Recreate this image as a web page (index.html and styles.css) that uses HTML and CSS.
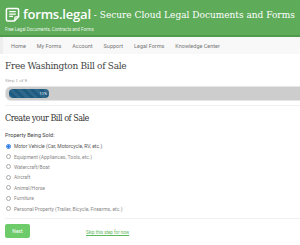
FILE: index.html
```html
<!DOCTYPE html>
<html lang="en">
<head>
  <meta charset="UTF-8" />
  <title>Free Washington Bill of Sale - forms.legal</title>
  <meta name="viewport" content="width=device-width, initial-scale=1.0" />
  <link rel="stylesheet" href="styles.css">
</head>
<body>

  <header class="site-header">
    <div class="brand">
      <svg class="logo" width="15" height="15" viewBox="0 0 16 16">
        <path d="M3 1.5h10a1.5 1.5 0 0 1 1.5 1.5v7.5l-4.5 4.5h-7A1.5 1.5 0 0 1 1.5 13.5V3A1.5 1.5 0 0 1 3 1.5z" fill="none" stroke="#fff" stroke-width="1.6" stroke-linejoin="round"/>
        <path d="M14.5 10.5h-3a1 1 0 0 0-1 1v3.5" fill="none" stroke="#fff" stroke-width="1.4"/>
        <path d="M4.5 5h7M4.5 7.5h7M4.5 10h4" stroke="#fff" stroke-width="1.4"/>
      </svg>
      <span class="brand-name">forms.legal</span>
      <span class="brand-tag">- Secure Cloud Legal Documents and Forms</span>
    </div>
    <div class="tagline">Free Legal Documents, Contracts and Forms</div>
  </header>

  <nav class="main-nav">
    <a href="#">Home</a>
    <a href="#">My Forms</a>
    <a href="#">Account</a>
    <a href="#">Support</a>
    <a href="#">Legal Forms</a>
    <a href="#">Knowledge Center</a>
  </nav>

  <main class="content">
    <h1>Free Washington Bill of Sale</h1>
    <div class="step-label">Step 1 of 9</div>
    <div class="progress">
      <div class="progress-bar" style="width: 40px">11%</div>
    </div>

    <hr class="rule">

    <h2>Create your Bill of Sale</h2>
    <div class="field-label">Property Being Sold:</div>

    <div class="options">
      <label class="option checked"><span class="radio"></span>Motor Vehicle (Car, Motorcycle, RV, etc.)</label>
      <label class="option"><span class="radio"></span>Equipment (Appliances, Tools, etc.)</label>
      <label class="option"><span class="radio"></span>Watercraft/Boat</label>
      <label class="option"><span class="radio"></span>Aircraft</label>
      <label class="option"><span class="radio"></span>Animal/Horse</label>
      <label class="option"><span class="radio"></span>Furniture</label>
      <label class="option"><span class="radio"></span>Personal Property (Trailer, Bicycle, Firearms, etc.)</label>
    </div>

    <hr class="rule">

    <div class="actions">
      <button class="btn">Next</button>
      <a href="#" class="skip">Skip this step for now</a>
    </div>
  </main>

</body>
</html>
```

FILE: styles.css
```css
body {
  margin: 0;
  font-family: Roboto, 'Open Sans', sans-serif;
  background: #fff;
  color: #555;
  width: 300px;
  height: 245px;
  overflow: hidden;
}
.site-header {
  background: #5eab5a;
  border-bottom: 2px solid #4f9b4b;
  height: 35px;
  padding: 0 5px;
  color: #fff;
}
.brand {
  display: flex;
  align-items: center;
  gap: 3px;
  padding-top: 5px;
  white-space: nowrap;
}
.logo {
  flex: none;
}
.brand-name {
  font-family: 'Open Sans', sans-serif;
  font-weight: 600;
  font-size: 13px;
  letter-spacing: -0.2px;
}
.brand-tag {
  font-family: 'DejaVu Serif Condensed', 'DejaVu Serif', serif;
  font-size: 10px;
}
.tagline {
  font-size: 4.5px;
  margin-top: 4px;
  color: #e6f3e5;
}
.main-nav {
  display: flex;
  height: 17px;
  align-items: center;
  background: #f8f8f8;
  border-left: 3px solid #eee;
  padding-left: 8px;
  gap: 11px;
}
.main-nav a {
  color: #777;
  text-decoration: none;
  font-size: 5.5px;
}
.content {
  padding: 0 0 0 5px;
}
h1 {
  font-family: 'DejaVu Serif Condensed', 'DejaVu Serif', serif;
  font-weight: normal;
  font-size: 10px;
  letter-spacing: -0.3px;
  color: #444;
  margin: 6px 0 0;
}
.step-label {
  font-family: 'DejaVu Serif', serif;
  font-size: 4px;
  color: #999;
  margin-top: 7px;
}
.progress {
  margin-top: 3px;
  width: 320px;
  height: 9px;
  padding: 2px 3px;
  background: #cdcdcd;
  border: 1px solid #e6e6e6;
  border-radius: 6px;
  box-sizing: content-box;
}
.progress-bar {
  height: 9px;
  border-radius: 4px;
  background: #1c5a80 repeating-linear-gradient(45deg, rgba(255,255,255,0.08) 0 3px, transparent 3px 6px);
  color: #fff;
  font-size: 4px;
  line-height: 9px;
  text-align: right;
  padding-right: 2px;
  box-sizing: border-box;
}
.rule {
  border: 0;
  border-top: 1px solid #f0f0f0;
  margin: 4px 0 0;
  width: 300px;
}
h2 {
  font-family: 'DejaVu Serif Condensed', 'DejaVu Serif', serif;
  font-weight: normal;
  font-size: 9px;
  letter-spacing: -0.5px;
  color: #333;
  margin: 7px 0 0;
}
.field-label {
  font-size: 5.5px;
  color: #444;
  margin-top: 9px;
}
.options {
  margin-top: 3px;
  display: flex;
  flex-direction: column;
}
.option {
  display: flex;
  align-items: center;
  gap: 3px;
  height: 10.4px;
  font-size: 5px;
  color: #888;
}
.option.checked {
  color: #555;
}
.radio {
  width: 3px;
  height: 3px;
  border: 0.7px solid #aaa;
  border-radius: 50%;
  margin-left: 1px;
}
.option.checked .radio {
  border-color: #2c7be5;
  background: radial-gradient(circle, #2c7be5 55%, #fff 60%);
}
.actions {
  display: flex;
  align-items: center;
  margin-top: 5px;
}
.btn {
  background: #6dcb6a;
  color: #fff;
  border: none;
  border-radius: 2px;
  width: 25px;
  height: 14px;
  font-family: Roboto, sans-serif;
  font-size: 5px;
  padding: 0;
}
.skip {
  margin-left: 56px;
  color: #5cb85c;
  font-size: 4.5px;
  margin-top: 3px;
}
```
